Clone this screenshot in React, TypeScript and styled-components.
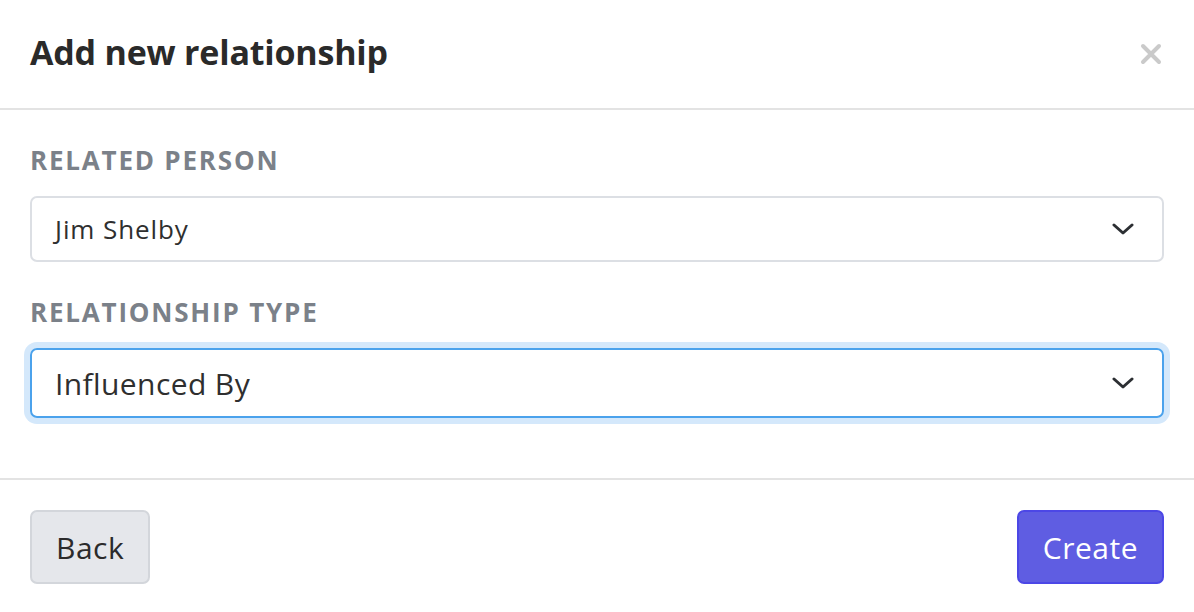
import styled, { createGlobalStyle } from "styled-components";

const GlobalStyle = createGlobalStyle`
  body {
    margin: 0;
    background: #ffffff;
    font-family: "Open Sans", "Noto Sans", sans-serif;
  }
`;

const Modal = styled.div`
  width: 1194px;
  height: 612px;
  display: flex;
  flex-direction: column;
  background: #ffffff;
`;

const Header = styled.header`
  height: 108px;
  display: flex;
  align-items: center;
  justify-content: space-between;
  padding: 0 30px;
  border-bottom: 2px solid #e3e3e3;
`;

const Title = styled.h2`
  margin: 0 0 4px;
  font-size: 34px;
  font-weight: 700;
  color: #2a2a2a;
  letter-spacing: -0.2px;
`;

const CloseButton = styled.button`
  border: none;
  background: none;
  padding: 0;
  margin-right: 2px;
  display: flex;
  cursor: pointer;
`;

const Body = styled.div`
  padding: 32px 30px 60px;
  display: flex;
  flex-direction: column;
`;

const Field = styled.div`
  display: flex;
  flex-direction: column;
  & + & {
    margin-top: 32px;
  }
`;

const Label = styled.label`
  font-size: 26px;
  line-height: 36px;
  font-weight: 700;
  color: #7b8189;
  letter-spacing: 1.8px;
  margin-bottom: 18px;
`;

const Select = styled.div<{ $focused?: boolean }>`
  height: ${(p) => (p.$focused ? 70 : 66)}px;
  box-sizing: border-box;
  display: flex;
  align-items: center;
  justify-content: space-between;
  padding: 0 28px 0 23px;
  border: 2px solid ${(p) => (p.$focused ? "#4ba2ec" : "#dcdfe4")};
  border-radius: 7px;
  box-shadow: ${(p) => (p.$focused ? "0 0 0 6px #d4e8fb" : "none")};
  font-size: ${(p) => (p.$focused ? 30 : 26)}px;
  letter-spacing: ${(p) => (p.$focused ? 0.4 : 0.9)}px;
  color: #2f2f2f;
`;

const Footer = styled.footer`
  border-top: 2px solid #e3e3e3;
  padding: 30px 30px 0;
  display: flex;
  justify-content: space-between;
`;

const Button = styled.button<{ $primary?: boolean }>`
  height: 74px;
  box-sizing: border-box;
  padding: 0 24px;
  border-radius: 7px;
  border: 2px solid ${(p) => (p.$primary ? "#4c47e6" : "#d3d6db")};
  background: ${(p) => (p.$primary ? "#5f5de2" : "#e5e7eb")};
  color: ${(p) => (p.$primary ? "#ffffff" : "#2b2b2b")};
  font-family: inherit;
  font-size: 30px;
  letter-spacing: 0.5px;
  cursor: pointer;
`;

function Chevron() {
  return (
    <svg width="22" height="14" viewBox="0 0 22 14">
      <polyline
        points="2,3 11,11 20,3"
        fill="none"
        stroke="#2c2f33"
        strokeWidth="3"
        strokeLinecap="round"
        strokeLinejoin="round"
      />
    </svg>
  );
}

export default function App() {
  return (
    <>
      <GlobalStyle />
      <Modal>
        <Header>
          <Title>Add new relationship</Title>
          <CloseButton aria-label="Close">
            <svg width="22" height="22" viewBox="0 0 22 22">
              <path
                d="M3 3 L19 19 M19 3 L3 19"
                stroke="#cacaca"
                strokeWidth="4"
                strokeLinecap="round"
              />
            </svg>
          </CloseButton>
        </Header>
        <Body>
          <Field>
            <Label>RELATED PERSON</Label>
            <Select>
              <span>Jim Shelby</span>
              <Chevron />
            </Select>
          </Field>
          <Field>
            <Label>RELATIONSHIP TYPE</Label>
            <Select $focused>
              <span>Influenced By</span>
              <Chevron />
            </Select>
          </Field>
        </Body>
        <Footer>
          <Button>Back</Button>
          <Button $primary>Create</Button>
        </Footer>
      </Modal>
    </>
  );
}
